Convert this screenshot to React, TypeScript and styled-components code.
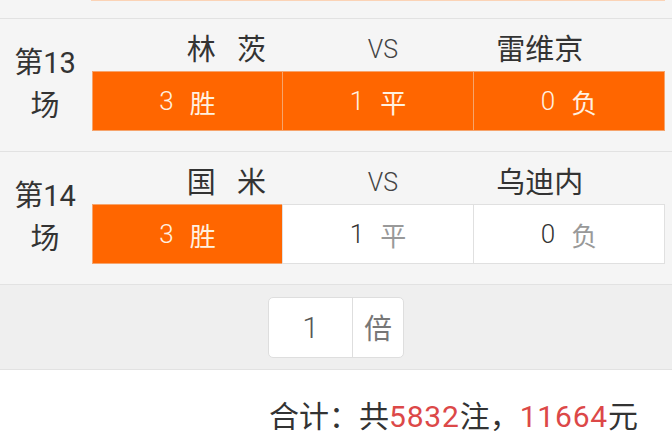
import React from "react";
import styled, { createGlobalStyle } from "styled-components";

const Global = createGlobalStyle`
  html, body { margin: 0; padding: 0; background: #f5f5f5; }
  body { font-family: Roboto, "Noto Sans CJK SC", sans-serif; color: #333; }
  * { box-sizing: border-box; }
`;

const Page = styled.div`
  width: 672px;
  height: 433px;
  overflow: hidden;
  display: flex;
  flex-direction: column;
  background: #f5f5f5;
`;

const Stub = styled.div`
  height: 18px;
  flex: none;
  padding: 0 7px 0 91px;
`;

const StubEdge = styled.div`
  height: 1px;
  background: #fbd3b6;
`;

const Row = styled.div`
  display: flex;
  flex: none;
  border-top: 1px solid #e2e2e2;
  background: #f5f5f5;
`;

const Label = styled.div`
  width: 92px;
  flex: none;
  padding: 0 8px 0 6px;
  display: flex;
  align-items: center;
  justify-content: center;
  text-align: center;
  font-size: 29px;
  line-height: 43px;
  color: #333;
`;

const Content = styled.div`
  flex: 1;
  padding: 0 7px 20px 0;
  display: flex;
  flex-direction: column;
`;

const Teams = styled.div`
  height: 52px;
  margin-left: 56px;
  width: 470px;
  display: grid;
  grid-template-columns: repeat(3, 1fr);
  align-items: center;
  padding-top: 10px;
`;

const Team = styled.div<{ $vs?: boolean }>`
  text-align: center;
  font-size: ${(p) => (p.$vs ? "25px" : "29px")};
  color: ${(p) => (p.$vs ? "#444" : "#333")};
  font-weight: ${(p) => (p.$vs ? 300 : 400)};
  white-space: pre;
  word-spacing: 14px;
  line-height: 40px;
`;

const Odds = styled.div`
  display: grid;
  grid-template-columns: repeat(3, 1fr);
  height: 60px;
`;

const Cell = styled.div<{ $on: boolean }>`
  display: flex;
  align-items: center;
  justify-content: center;
  gap: 16px;
  background: ${(p) => (p.$on ? "#ff6600" : "#ffffff")};
  border: 1px solid ${(p) => (p.$on ? "#f6a46c" : "#e0e0e0")};
  & + & { margin-left: -1px; }
  font-size: 26px;
  font-weight: 300;
`;

const Num = styled.span<{ $on: boolean }>`
  color: ${(p) => (p.$on ? "#fff1e0" : "#333")};
`;

const Word = styled.span<{ $on: boolean }>`
  color: ${(p) => (p.$on ? "#fff1e0" : "#999")};
  font-weight: 400;
`;

const Multi = styled.div`
  flex: none;
  height: 86px;
  border-top: 1px solid #e2e2e2;
  border-bottom: 1px solid #e2e2e2;
  background: #efefef;
  display: flex;
  align-items: center;
  justify-content: center;
`;

const MultiBox = styled.div`
  display: flex;
  width: 136px;
  height: 61px;
  background: #fff;
  border: 1px solid #dedede;
  border-radius: 5px;
`;

const MultiValue = styled.div`
  width: 84px;
  border-right: 1px solid #dedede;
  display: flex;
  align-items: center;
  justify-content: center;
  font-size: 30px;
  font-weight: 300;
  color: #555;
`;

const MultiUnit = styled.div`
  flex: 1;
  display: flex;
  align-items: center;
  justify-content: center;
  font-size: 28px;
  color: #777;
`;

const Footer = styled.div`
  flex: 1;
  background: #fff;
  padding: 28px 34px 0 0;
  text-align: right;
  font-size: 30px;
  line-height: 38px;
  color: #333;
`;

const Red = styled.span`
  color: #dc4848;
  letter-spacing: 0.8px;
`;

type Match = {
  no: number;
  home: string;
  away: string;
  picks: [boolean, boolean, boolean];
};

const matches: Match[] = [
  { no: 13, home: "林 茨", away: "雷维京", picks: [true, true, true] },
  { no: 14, home: "国 米", away: "乌迪内", picks: [true, false, false] },
];

const options: [string, string][] = [
  ["3", "胜"],
  ["1", "平"],
  ["0", "负"],
];

export default function App() {
  return (
    <>
      <Global />
      <Page>
        <Stub>
          <StubEdge />
        </Stub>
        {matches.map((m) => (
          <Row key={m.no}>
            <Label>第{m.no}场</Label>
            <Content>
              <Teams>
                <Team>{m.home}</Team>
                <Team $vs>VS</Team>
                <Team>{m.away}</Team>
              </Teams>
              <Odds>
                {options.map(([n, w], i) => (
                  <Cell key={n} $on={m.picks[i]}>
                    <Num $on={m.picks[i]}>{n}</Num>
                    <Word $on={m.picks[i]}>{w}</Word>
                  </Cell>
                ))}
              </Odds>
            </Content>
          </Row>
        ))}
        <Multi>
          <MultiBox>
            <MultiValue>1</MultiValue>
            <MultiUnit>倍</MultiUnit>
          </MultiBox>
        </Multi>
        <Footer>
          合计：共<Red>5832</Red>注，<Red>11664</Red>元
        </Footer>
      </Page>
    </>
  );
}
